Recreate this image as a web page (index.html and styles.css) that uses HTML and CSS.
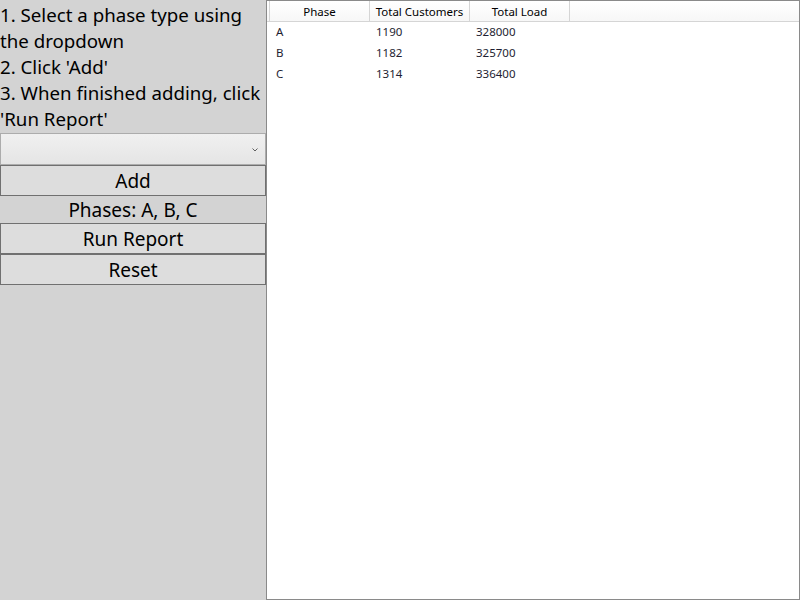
FILE: index.html
```html
<!DOCTYPE html>
<html>
<head>
<meta charset="utf-8">
<link rel="stylesheet" href="styles.css">
</head>
<body>
<div class="app">
  <div class="side">
    <p class="steps">1. Select a phase type using<br>the dropdown<br>2. Click 'Add'<br>3. When finished adding, click<br>'Run Report'</p>
    <div class="combo"><svg class="chev" width="6" height="4" viewBox="0 0 6 4"><path d="M0.5 0.5 L3 3 L5.5 0.5" fill="none" stroke="#606060" stroke-width="1"/></svg></div>
    <button class="btn">Add</button>
    <div class="phases">Phases: A, B, C</div>
    <button class="btn">Run Report</button>
    <button class="btn">Reset</button>
  </div>
  <div class="grid">
    <div class="head">
      <div class="hcell gutter"></div>
      <div class="hcell c">Phase</div>
      <div class="hcell c">Total Customers</div>
      <div class="hcell c">Total Load</div>
      <div class="hcell fill"></div>
    </div>
    <div class="row"><div class="gut"></div><div class="cell">A</div><div class="cell">1190</div><div class="cell">328000</div></div>
    <div class="row"><div class="gut"></div><div class="cell">B</div><div class="cell">1182</div><div class="cell">325700</div></div>
    <div class="row"><div class="gut"></div><div class="cell">C</div><div class="cell">1314</div><div class="cell">336400</div></div>
  </div>
</div>
</body>
</html>
```
FILE: styles.css
```css
html, body {
  margin: 0;
  padding: 0;
}
body {
  width: 800px;
  height: 600px;
  overflow: hidden;
  font-family: "Segoe UI", "Noto Sans", "Open Sans", sans-serif;
  color: #000;
}
.app {
  display: grid;
  grid-template-columns: 266px 1fr;
  height: 600px;
}
.side {
  background: #d3d3d3;
  display: flex;
  flex-direction: column;
}
.steps {
  margin: 0;
  font-size: 18.7px;
  line-height: 26px;
  height: 131px;
  padding-top: 2px;
  white-space: nowrap;
  overflow: hidden;
}
.combo {
  height: 30px;
  border: 1px solid #acacac;
  background: linear-gradient(#f0f0f0, #e5e5e5);
  display: flex;
  justify-content: flex-end;
  align-items: center;
  padding-right: 7px;
}
.chev {
  display: block;
  margin-top: 1px;
}
.btn {
  font-family: inherit;
  font-size: 19px;
  height: 31px;
  margin: 0;
  padding: 2px 0 0 0;
  border: 1px solid #707070;
  background: #dddddd;
  color: #000;
  line-height: 1;
  width: 266px;
}
.phases {
  height: 27px;
  font-size: 19px;
  line-height: 27px;
  padding-top: 1px;
  box-sizing: border-box;
  text-align: center;
}
.grid {
  border: 1px solid #8a8a8a;
  background: #fff;
  font-size: 11.5px;
}
.head {
  display: flex;
  height: 20px;
  border-bottom: 1px solid #d5d5d5;
  background: linear-gradient(#ffffff, #f7f7f7);
}
.hcell {
  height: 20px;
  line-height: 20px;
  padding-top: 1px;
  border-right: 1px solid #d5d5d5;
  box-sizing: border-box;
}
.hcell.gutter {
  width: 3px;
}
.hcell.c {
  width: 100px;
  text-align: center;
}
.hcell.fill {
  border-right: none;
  flex: 1;
}
.row {
  display: flex;
  height: 21px;
  line-height: 20px;
  color: #1e1e32;
}
.gut {
  width: 3px;
}
.cell {
  width: 100px;
  padding-left: 6px;
  box-sizing: border-box;
}
```
